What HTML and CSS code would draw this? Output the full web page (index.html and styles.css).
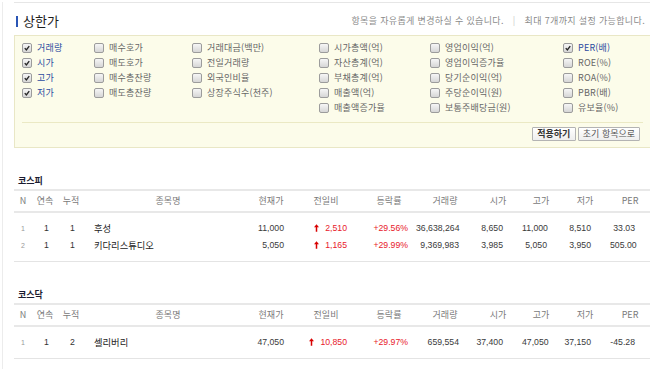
FILE: index.html
```html
<!DOCTYPE html>
<html lang="ko">
<head>
<meta charset="utf-8">
<title>상한가</title>
<link rel="stylesheet" href="styles.css">
</head>
<body>
<div class="frame">
  <div class="topline"></div>
  <div class="titlebar">
    <h2 class="title">상한가</h2>
    <p class="hint"><span>항목을 자유롭게 변경하실 수 있습니다.</span><span class="sep">|</span><span>최대 7개까지 설정 가능합니다.</span></p>
  </div>

  <div class="options">
    <div class="opt-grid">
      <ul class="opt-col">
        <li class="opt on"><span class="cb"><svg viewBox="0 0 10 10"><path d="M2.2 5.2 L4.2 7.4 L7.8 2.6" /></svg></span>거래량</li>
        <li class="opt on"><span class="cb"><svg viewBox="0 0 10 10"><path d="M2.2 5.2 L4.2 7.4 L7.8 2.6" /></svg></span>시가</li>
        <li class="opt on"><span class="cb"><svg viewBox="0 0 10 10"><path d="M2.2 5.2 L4.2 7.4 L7.8 2.6" /></svg></span>고가</li>
        <li class="opt on"><span class="cb"><svg viewBox="0 0 10 10"><path d="M2.2 5.2 L4.2 7.4 L7.8 2.6" /></svg></span>저가</li>
      </ul>
      <ul class="opt-col">
        <li class="opt"><span class="cb"></span>매수호가</li>
        <li class="opt"><span class="cb"></span>매도호가</li>
        <li class="opt"><span class="cb"></span>매수총잔량</li>
        <li class="opt"><span class="cb"></span>매도총잔량</li>
      </ul>
      <ul class="opt-col">
        <li class="opt"><span class="cb"></span>거래대금(백만)</li>
        <li class="opt"><span class="cb"></span>전일거래량</li>
        <li class="opt"><span class="cb"></span>외국인비율</li>
        <li class="opt"><span class="cb"></span>상장주식수(천주)</li>
      </ul>
      <ul class="opt-col">
        <li class="opt"><span class="cb"></span>시가총액(억)</li>
        <li class="opt"><span class="cb"></span>자산총계(억)</li>
        <li class="opt"><span class="cb"></span>부채총계(억)</li>
        <li class="opt"><span class="cb"></span>매출액(억)</li>
        <li class="opt"><span class="cb"></span>매출액증가율</li>
      </ul>
      <ul class="opt-col">
        <li class="opt"><span class="cb"></span>영업이익(억)</li>
        <li class="opt"><span class="cb"></span>영업이익증가율</li>
        <li class="opt"><span class="cb"></span>당기순이익(억)</li>
        <li class="opt"><span class="cb"></span>주당순이익(원)</li>
        <li class="opt"><span class="cb"></span>보통주배당금(원)</li>
      </ul>
      <ul class="opt-col">
        <li class="opt on"><span class="cb"><svg viewBox="0 0 10 10"><path d="M2.2 5.2 L4.2 7.4 L7.8 2.6" /></svg></span>PER(배)</li>
        <li class="opt"><span class="cb"></span>ROE(%)</li>
        <li class="opt"><span class="cb"></span>ROA(%)</li>
        <li class="opt"><span class="cb"></span>PBR(배)</li>
        <li class="opt"><span class="cb"></span>유보율(%)</li>
      </ul>
    </div>
    <div class="opt-actions">
      <button class="btn btn-apply" type="button">적용하기</button>
      <button class="btn" type="button">초기 항목으로</button>
    </div>
  </div>

  <section class="market">
    <h3 class="market-title">코스피</h3>
    <table class="grid">
      <colgroup>
        <col class="w-n"><col class="w-seq"><col class="w-cum"><col class="w-name"><col class="w-price"><col class="w-diff"><col class="w-rate"><col class="w-vol"><col class="w-open"><col class="w-high"><col class="w-low"><col class="w-per">
      </colgroup>
      <thead>
        <tr><th>N</th><th>연속</th><th>누적</th><th>종목명</th><th>현재가</th><th>전일비</th><th>등락률</th><th>거래량</th><th>시가</th><th>고가</th><th>저가</th><th>PER</th></tr>
      </thead>
      <tbody>
        <tr class="pad"><td colspan="12"></td></tr>
        <tr>
          <td class="c-n">1</td><td class="c-seq">1</td><td class="c-cum">1</td><td class="c-name">후성</td>
          <td class="c-price">11,000</td>
          <td class="c-diff up"><svg class="arrow" viewBox="0 0 6 9"><path d="M3 0 L6 3.6 L3.9 3.6 L3.9 9 L2.1 9 L2.1 3.6 L0 3.6 Z"/></svg>2,510</td>
          <td class="c-rate up">+29.56%</td><td class="c-vol">36,638,264</td><td class="c-open">8,650</td><td class="c-high">11,000</td><td class="c-low">8,510</td><td class="c-per">33.03</td>
        </tr>
        <tr>
          <td class="c-n">2</td><td class="c-seq">1</td><td class="c-cum">1</td><td class="c-name">키다리스튜디오</td>
          <td class="c-price">5,050</td>
          <td class="c-diff up"><svg class="arrow" viewBox="0 0 6 9"><path d="M3 0 L6 3.6 L3.9 3.6 L3.9 9 L2.1 9 L2.1 3.6 L0 3.6 Z"/></svg>1,165</td>
          <td class="c-rate up">+29.99%</td><td class="c-vol">9,369,983</td><td class="c-open">3,985</td><td class="c-high">5,050</td><td class="c-low">3,950</td><td class="c-per">505.00</td>
        </tr>
        <tr class="pad end"><td colspan="12"></td></tr>
      </tbody>
    </table>
  </section>

  <section class="market">
    <h3 class="market-title">코스닥</h3>
    <table class="grid">
      <colgroup>
        <col class="w-n"><col class="w-seq"><col class="w-cum"><col class="w-name"><col class="w-price"><col class="w-diff"><col class="w-rate"><col class="w-vol"><col class="w-open"><col class="w-high"><col class="w-low"><col class="w-per">
      </colgroup>
      <thead>
        <tr><th>N</th><th>연속</th><th>누적</th><th>종목명</th><th>현재가</th><th>전일비</th><th>등락률</th><th>거래량</th><th>시가</th><th>고가</th><th>저가</th><th>PER</th></tr>
      </thead>
      <tbody>
        <tr class="pad"><td colspan="12"></td></tr>
        <tr>
          <td class="c-n">1</td><td class="c-seq">1</td><td class="c-cum">2</td><td class="c-name">셀리버리</td>
          <td class="c-price">47,050</td>
          <td class="c-diff up"><svg class="arrow" viewBox="0 0 6 9"><path d="M3 0 L6 3.6 L3.9 3.6 L3.9 9 L2.1 9 L2.1 3.6 L0 3.6 Z"/></svg>10,850</td>
          <td class="c-rate up">+29.97%</td><td class="c-vol">659,554</td><td class="c-open">37,400</td><td class="c-high">47,050</td><td class="c-low">37,150</td><td class="c-per">-45.28</td>
        </tr>
        <tr class="pad end"><td colspan="12"></td></tr>
      </tbody>
    </table>
  </section>
</div>
</body>
</html>
```

FILE: styles.css
```css
html, body {
  margin: 0;
  padding: 0;
  background: #fff;
}
body {
  font-family: "Noto Sans CJK KR", "Liberation Sans", sans-serif;
  color: #333;
  overflow: hidden;
}
.frame {
  margin-left: 2px;
  border-left: 1px solid #ececec;
  padding-left: 11px;
  min-height: 369px;
  box-sizing: border-box;
}
.topline {
  margin-top: 2px;
  border-top: 1px solid #e6e6e6;
}
.titlebar {
  height: 32px;
  padding-top: 4px;
  box-sizing: border-box;
  display: flex;
  align-items: center;
  justify-content: space-between;
}
.title {
  margin: 0 0 0 2px;
  display: flex;
  align-items: center;
  font-size: 13px;
  line-height: 16px;
  font-weight: normal;
  color: #1e1e1e;
}
.title::before {
  content: "";
  width: 2px;
  height: 11px;
  background: #2a55b5;
  margin-right: 5px;
}
.hint {
  margin: 0 5px 0 0;
  font-size: 9px;
  line-height: 12px;
  letter-spacing: 0.35px;
  color: #8a8a8a;
  display: flex;
  align-items: center;
}
.hint .sep {
  color: #c8c8c8;
  margin: 0 9px;
}

.options {
  background: #fcfcea;
  border-top: 1px solid #e9e7c6;
  border-bottom: 1px solid #e9e7c6;
  border-left: 1px solid #e9e7c6;
  padding: 4px 7px 6px 7px;
}
.opt-grid {
  display: grid;
  grid-template-columns: 72px 98px 127px 111px 133px 1fr;
}
.opt-col {
  list-style: none;
  margin: 0;
  padding: 0;
}
.opt {
  height: 15px;
  display: flex;
  align-items: center;
  font-size: 9px;
  letter-spacing: 0.2px;
  color: #666;
  white-space: nowrap;
}
.opt.on {
  color: #2b4b9f;
}
.cb {
  width: 8px;
  height: 8px;
  border: 1px solid #9c9c9c;
  border-radius: 2px;
  background: linear-gradient(#f6f6f6, #d6d6d6);
  margin-right: 5px;
  flex: none;
  display: flex;
}
.cb svg {
  width: 8px;
  height: 8px;
}
.cb path {
  fill: none;
  stroke: #262626;
  stroke-width: 1.7;
}
.opt-actions {
  margin-top: 7px;
  border-top: 1px solid #ebe9c4;
  padding-top: 4px;
  display: flex;
  justify-content: flex-end;
  gap: 2px;
  padding-right: 3px;
}
.btn {
  height: 14px;
  padding: 0 4px;
  border: 1px solid #b3b3b3;
  border-radius: 1px;
  background: linear-gradient(#ffffff, #eeeeee);
  font-family: "Noto Sans CJK KR", sans-serif;
  font-size: 9px;
  line-height: 12px;
  color: #555;
  cursor: pointer;
}
.btn-apply {
  font-weight: bold;
  color: #333;
  width: 44px;
}

.market {
  margin-top: 24px;
}
.market-title {
  margin: 0 0 0 4px;
  font-size: 9px;
  line-height: 17px;
  height: 17px;
  font-weight: bold;
  color: #1b1b30;
}
.grid {
  width: 100%;
  table-layout: fixed;
  border-collapse: separate;
  border-spacing: 0;
  font-family: "Liberation Sans", "Noto Sans CJK KR", sans-serif;
}
.w-n { width: 18px; }
.w-seq { width: 26px; }
.w-cum { width: 26px; }
.w-name { width: 168px; }
.w-price { width: 38px; }
.w-diff { width: 72px; }
.w-rate { width: 54px; }
.w-vol { width: 58px; }
.w-open { width: 48px; }
.w-high { width: 38px; }
.w-low { width: 50px; }
.w-per { width: 40px; }

.grid th {
  height: 20px;
  padding: 0;
  border-top: 2px solid #e8e8e8;
  border-bottom: 2px solid #e8e8e8;
  font-family: "Noto Sans CJK KR", sans-serif;
  font-size: 9px;
  line-height: 20px;
  font-weight: normal;
  color: #7a7a7a;
  text-align: center;
  white-space: nowrap;
}
.grid td {
  height: 17px;
  padding: 0;
  font-size: 8.7px;
  line-height: 17px;
  color: #3a3a3a;
  text-align: right;
  white-space: nowrap;
}
.grid tr.pad td {
  height: 7px;
  line-height: 0;
  font-size: 0;
}
.grid tr.end td {
  border-bottom: 1px solid #e4e4e4;
}
.grid td.c-n {
  text-align: center;
  font-size: 7px;
  color: #999;
}
.grid td.c-seq,
.grid td.c-cum {
  text-align: center;
  padding-left: 3px;
  color: #333;
}
.grid td.c-name {
  text-align: left;
  padding-left: 10px;
  font-family: "Noto Sans CJK KR", sans-serif;
  font-size: 9.3px;
  color: #222;
}
.grid td.c-price { padding-right: 6px; }
.grid td.c-diff { padding-right: 15px; }
.grid td.c-rate { padding-right: 8px; }
.grid td.c-vol { padding-right: 15px; }
.grid td.c-open { padding-right: 19px; }
.grid td.c-high { padding-right: 13px; }
.grid td.c-low { padding-right: 19px; }
.grid td.c-per { padding-right: 15px; }
.grid td.up {
  color: #e8202a;
}
.arrow {
  width: 5px;
  height: 8px;
  margin-right: 6px;
  vertical-align: -0.5px;
}
.arrow path {
  fill: #d80000;
}
```
